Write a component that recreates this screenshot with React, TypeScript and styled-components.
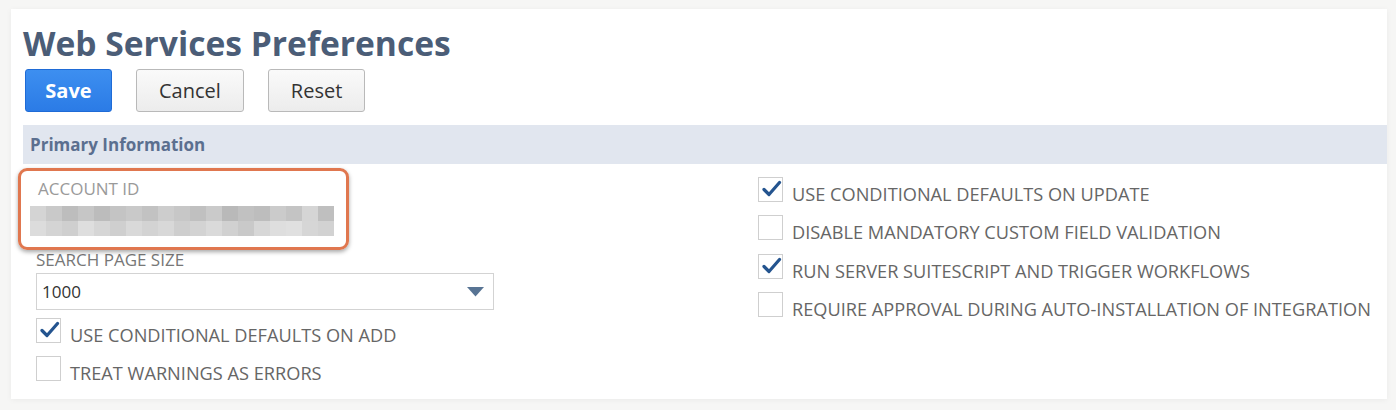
import React from "react";
import styled, { createGlobalStyle } from "styled-components";

const Global = createGlobalStyle`
  html, body { margin: 0; padding: 0; background: #f6f6f5; }
  body { font-family: "Open Sans", "Liberation Sans", sans-serif; }
  * { box-sizing: border-box; }
`;

const Page = styled.div`
  padding: 9px 9px 11px 11px;
  height: 410px;
`;

const Card = styled.div`
  background: #ffffff;
  height: 390px;
  box-shadow: 0 1px 6px rgba(0, 0, 0, 0.05);
  padding: 14px 0 0 12px;
`;

const Title = styled.h1`
  margin: 0;
  font-size: 33.6px;
  line-height: 40px;
  font-weight: 700;
  color: #4b5d77;
`;

const Toolbar = styled.div`
  display: flex;
  gap: 24px;
  margin-top: 6px;
  margin-left: 2px;
`;

const Button = styled.button<{ $primary?: boolean }>`
  height: 43px;
  padding: 0 ${(p) => (p.$primary ? "18px" : "22px")};
  min-width: ${(p) => (p.$primary ? "87px" : "96px")};
  border-radius: 3px;
  font-family: "Open Sans", sans-serif;
  font-size: 20px;
  font-weight: ${(p) => (p.$primary ? 700 : 400)};
  color: ${(p) => (p.$primary ? "#ffffff" : "#333333")};
  border: 1px solid ${(p) => (p.$primary ? "#1f6bd6" : "#b9b9b9")};
  background: ${(p) =>
    p.$primary
      ? "linear-gradient(#3d8ff0, #2b7be6)"
      : "linear-gradient(#fafafa, #ececec)"};
  cursor: pointer;
`;

const SectionHeader = styled.div`
  margin-top: 13px;
  height: 39px;
  background: #e1e6ef;
  display: flex;
  align-items: center;
  padding-left: 7px;
  font-size: 17px;
  font-weight: 700;
  color: #5b6f8f;
`;

const Columns = styled.div`
  display: grid;
  grid-template-columns: 735px 1fr;
`;

const LeftCol = styled.div`
  padding-top: 4px;
  padding-left: 13px;
`;

const RightCol = styled.div`
  padding-top: 9px;
`;

const Highlight = styled.div`
  position: relative;
  margin-left: -18px;
  width: 331px;
  height: 82px;
  border: 3px solid #e0774f;
  border-radius: 9px;
  box-shadow: 0 2px 4px rgba(0, 0, 0, 0.35);
  padding: 8px 0 0 17px;
`;

const FieldLabel = styled.div<{ $muted?: boolean }>`
  font-size: 17px;
  line-height: 20px;
  color: ${(p) => (p.$muted ? "#9a9a9a" : "#777777")};
  text-transform: uppercase;
`;

const Blur = styled.div`
  margin-top: 7px;
  margin-left: -8px;
  width: 304px;
  height: 30px;
  display: grid;
  grid-template-columns: repeat(19, 1fr);
  grid-template-rows: 1fr 1fr;
`;

const Pixel = styled.div``;

const SelectBox = styled.div`
  margin-top: 3px;
  width: 458px;
  height: 37px;
  border: 1px solid #d3d3d3;
  display: flex;
  align-items: center;
  justify-content: space-between;
  padding: 0 9px 0 5px;
  font-size: 17px;
  color: #333;
`;

const Check = styled.div`
  display: flex;
  align-items: center;
  height: 38.3px;
  gap: 9px;
`;

const Box = styled.div`
  width: 25px;
  height: 25px;
  border: 1px solid #cfcfcf;
  background: #fff;
  position: relative;
  flex: none;
  margin-top: -5px;
`;

const CheckLabel = styled.span`
  font-size: 18.2px;
  color: #666666;
  margin-top: 4px;
  white-space: nowrap;
`;

const LeftChecks = styled.div`
  margin-top: 4px;
`;

const blurShades = [
  "#d4d4d4","#c9c9c9","#bdbdbd","#c6c6c6","#bcbcbc","#c4c4c4","#c9c9c9","#c2c2c2","#cdcdcd","#c7c7c7","#c0c0c0","#cacaca","#b9b9b9","#c1c1c1","#bdbdbd","#cbcbcb","#c4c4c4","#d5d5d5","#bfbfbf",
  "#dcdcdc","#d4d4d4","#cfcfcf","#dedede","#d6d6d6","#cfcfcf","#d9d9d9","#d3d3d3","#d8d8d8","#cecece","#d3d3d3","#dadada","#d1d1d1","#c9c9c9","#d7d7d7","#dedede","#e0e0e0","#d6d6d6","#d2d2d2",
];

const Tick = () => (
  <svg width="20" height="18" viewBox="0 0 20 18" style={{ position: "absolute", left: 3, top: 2 }}>
    <path d="M2 9.5 L7 14.5 L17.5 2.5" fill="none" stroke="#24548f" strokeWidth="3.2" strokeLinecap="round" strokeLinejoin="round" />
  </svg>
);

const CheckRow = ({ checked, label }: { checked?: boolean; label: string }) => (
  <Check>
    <Box>{checked && <Tick />}</Box>
    <CheckLabel>{label}</CheckLabel>
  </Check>
);

export default function App() {
  return (
    <>
      <Global />
      <Page>
        <Card>
          <Title>Web Services Preferences</Title>
          <Toolbar>
            <Button $primary>Save</Button>
            <Button>Cancel</Button>
            <Button>Reset</Button>
          </Toolbar>
          <SectionHeader>Primary Information</SectionHeader>
          <Columns>
            <LeftCol>
              <Highlight>
                <FieldLabel $muted>Account ID</FieldLabel>
                <Blur>
                  {blurShades.map((c, i) => (
                    <Pixel key={i} style={{ background: c }} />
                  ))}
                </Blur>
              </Highlight>
              <FieldLabel>Search Page Size</FieldLabel>
              <SelectBox>
                <span>1000</span>
                <svg width="17" height="10" viewBox="0 0 17 10">
                  <path d="M0 0 H17 L8.5 9.5 Z" fill="#587494" />
                </svg>
              </SelectBox>
              <LeftChecks>
                <CheckRow checked label="USE CONDITIONAL DEFAULTS ON ADD" />
                <CheckRow label="TREAT WARNINGS AS ERRORS" />
              </LeftChecks>
            </LeftCol>
            <RightCol>
              <CheckRow checked label="USE CONDITIONAL DEFAULTS ON UPDATE" />
              <CheckRow label="DISABLE MANDATORY CUSTOM FIELD VALIDATION" />
              <CheckRow checked label="RUN SERVER SUITESCRIPT AND TRIGGER WORKFLOWS" />
              <CheckRow label="REQUIRE APPROVAL DURING AUTO-INSTALLATION OF INTEGRATION" />
            </RightCol>
          </Columns>
        </Card>
      </Page>
    </>
  );
}
